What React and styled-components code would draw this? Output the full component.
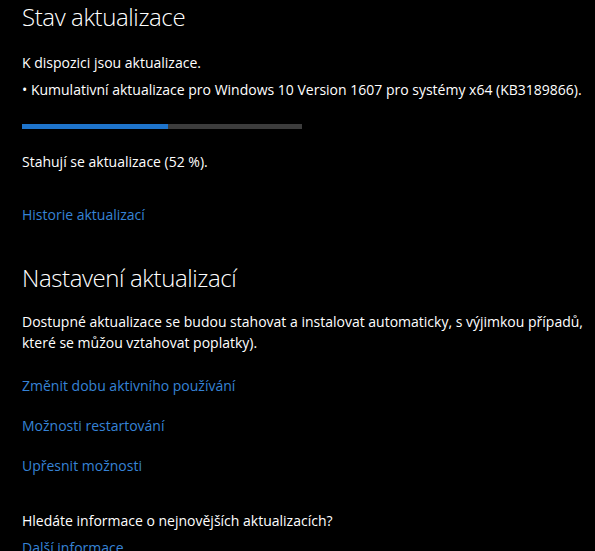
import React from 'react';
import styled, { createGlobalStyle } from 'styled-components';

const GlobalStyle = createGlobalStyle`
  html, body {
    margin: 0;
    padding: 0;
    background: #000;
  }
  body {
    font-family: 'Open Sans', 'Noto Sans', sans-serif;
    color: #fff;
    overflow: hidden;
  }
`;

const Page = styled.div`
  width: 595px;
  height: 551px;
  background: #000;
  padding: 0 0 0 22px;
  box-sizing: border-box;
  overflow: hidden;
`;

const Heading = styled.h1`
  margin: ${(p) => p.top || 0}px 0 0 0;
  font-size: 24px;
  font-weight: 300;
  line-height: 34px;
  letter-spacing: -0.4px;
  color: #fff;
`;

const Text = styled.p`
  margin: ${(p) => p.top || 0}px 0 0 0;
  font-size: 14px;
  line-height: 21px;
  letter-spacing: 0;
  color: #fff;
`;

const Link = styled.a`
  display: block;
  margin-top: ${(p) => p.top || 0}px;
  font-size: 14px;
  line-height: 21px;
  color: #3683d6;
  text-decoration: none;
  cursor: pointer;
`;

const Track = styled.div`
  margin-top: ${(p) => p.top || 0}px;
  width: 280px;
  height: 5px;
  background: #3c3c3c;
`;

const Fill = styled.div`
  height: 100%;
  background: #1e74cc;
`;

const Progress = ({ value, top }) => (
  <Track top={top}>
    <Fill style={{ width: `${value}%` }} />
  </Track>
);

export default function App() {
  return (
    <>
      <GlobalStyle />
      <Page>
        <Heading top={0}>Stav aktualizace</Heading>
        <Text top={18}>K dispozici jsou aktualizace.</Text>
        <Text top={6}>
          • Kumulativní aktualizace pro Windows 10 Version 1607 pro systémy x64 (KB3189866).
        </Text>
        <Progress value={52} top={24} />
        <Text top={22}>Stahují se aktualizace (52 %).</Text>
        <Link top={32}>Historie aktualizací</Link>
        <Heading top={36}>Nastavení aktualizací</Heading>
        <Text top={16}>
          Dostupné aktualizace se budou stahovat a instalovat automaticky, s výjimkou případů,
          které se můžou vztahovat poplatky).
        </Text>
        <Link top={22}>Změnit dobu aktivního používání</Link>
        <Link top={19}>Možnosti restartování</Link>
        <Link top={19}>Upřesnit možnosti</Link>
        <Text top={34}>Hledáte informace o nejnovějších aktualizacích?</Text>
        <Link top={6}>Další informace</Link>
      </Page>
    </>
  );
}
